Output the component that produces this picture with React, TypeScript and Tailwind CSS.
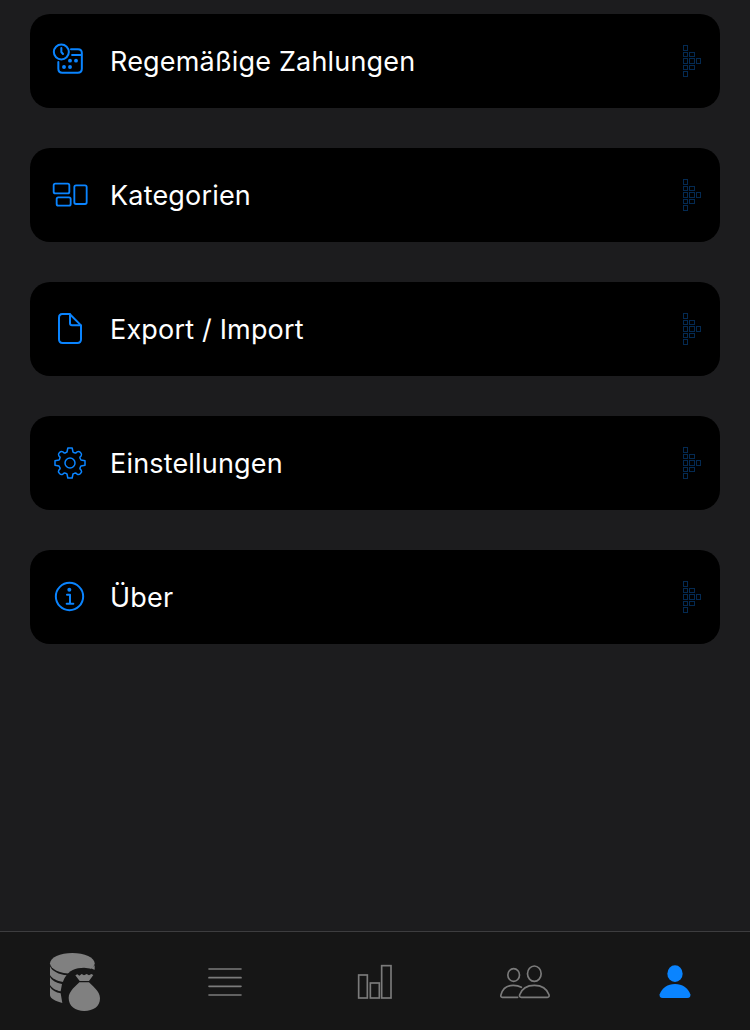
import type { ReactNode } from "react";

const gearPath = (() => {
  const segments: string[] = [];
  for (let i = 0; i < 8; i++) {
    const a = (i * Math.PI) / 4;
    const at = (x: number, y: number) => {
      const px = 90 + x * Math.cos(a) - y * Math.sin(a);
      const py = 75 + x * Math.sin(a) + y * Math.cos(a);
      return `${px.toFixed(1)} ${py.toFixed(1)}`;
    };
    const start = `${i === 0 ? "M" : "L"}${at(-9, -33)}`;
    // Teeth on the diagonals are rounded, the others have flat tips.
    const tip =
      i % 2 === 0
        ? `L${at(-6.5, -45)}L${at(6.5, -45)}`
        : `L${at(-8.5, -39)}Q${at(-7.5, -44.5)} ${at(0, -44.5)}Q${at(7.5, -44.5)} ${at(8.5, -39)}`;
    segments.push(`${start}${tip}L${at(9, -33)}Q${at(11, -31)} ${at(13, -31)}`);
  }
  return `${segments.join("")}Z`;
})();

function RowIcon({ children }: { children: ReactNode }) {
  return (
    <svg
      className="h-[50px] w-[60px] shrink-0"
      viewBox="0 0 180 150"
      fill="none"
      stroke="#0a84ff"
      strokeWidth="6"
      strokeLinecap="round"
      strokeLinejoin="round"
    >
      {children}
    </svg>
  );
}

const rows: { label: string; icon: ReactNode }[] = [
  {
    label: "Regemäßige Zahlungen",
    icon: (
      <>
        <circle cx="64" cy="48" r="22.5" />
        <path d="M64 36V48L69 54" />
        <path d="M93 40H114Q125.500 40 125.500 51V98Q125.500 110 113 110H67Q55 110 55 98V78" />
        <path d="M94 57H125" strokeLinecap="butt" />
        <g fill="#0a84ff" stroke="none">
          <circle cx="90" cy="74" r="5.800" />
          <circle cx="108" cy="74" r="5.800" />
          <circle cx="72" cy="93" r="5.800" />
          <circle cx="90" cy="93" r="5.800" />
        </g>
      </>
    ),
  },
  {
    label: "Kategorien",
    icon: (
      <g strokeWidth="5.500">
        <rect x="41" y="41" width="47" height="29" rx="5" />
        <rect x="50" y="82" width="42" height="25" rx="5" />
        <rect x="103" y="46" width="37" height="56" rx="5" />
      </g>
    ),
  },
  {
    label: "Export / Import",
    icon: (
      <>
        <path d="M67 30H89L123 64V106Q123 117 112 117H68Q57 117 57 106V41Q57 30 67 30Z" />
        <path d="M90 31V58Q90 64 96 64H122" />
      </>
    ),
  },
  {
    label: "Einstellungen",
    icon: (
      <g strokeWidth="4.500">
        <path d={gearPath} />
        <circle cx="90" cy="75" r="15" />
      </g>
    ),
  },
  {
    label: "Über",
    icon: (
      <>
        <circle cx="88.500" cy="73.500" r="41" />
        <circle cx="88" cy="53" r="6" fill="#0a84ff" stroke="none" />
        <path d="M81 68H90V94M80 95H100" />
      </>
    ),
  },
];

const arrowColumns = [
  { x: 40.5, width: 12, rows: [0, 1, 2, 3, 4] },
  { x: 58.5, width: 15, rows: [1, 2, 3] },
  { x: 79.5, width: 12, rows: [2] },
];

const arrowRows = [
  { y: 28.5, height: 15 },
  { y: 49.5, height: 12 },
  { y: 67.5, height: 15 },
  { y: 88.5, height: 12 },
  { y: 106.5, height: 15 },
];

function DottedArrow() {
  return (
    <svg
      className="ml-auto size-[50px] shrink-0"
      viewBox="0 0 150 150"
      fill="none"
      stroke="#042a52"
      strokeWidth="3"
    >
      {arrowColumns.map(({ x, width, rows: cells }) =>
        cells.map((r) => (
          <rect
            key={`${x}-${r}`}
            x={x}
            y={arrowRows[r].y}
            width={width}
            height={arrowRows[r].height}
          />
        )),
      )}
    </svg>
  );
}

function TabIcon({ children }: { children: ReactNode }) {
  return (
    <svg
      className="h-[60px] w-[70px]"
      viewBox="0 0 210 180"
      fill="none"
      stroke="#7b7b7b"
      strokeWidth="5"
      strokeLinecap="round"
      strokeLinejoin="round"
    >
      {children}
    </svg>
  );
}

function SavingsIcon() {
  return (
    <svg className="h-[95px] w-[80px]" viewBox="0 0 240 285" fill="#808080">
      <ellipse cx="97" cy="115" rx="67" ry="31" />
      <path d="M30 124C36 139 56 149 82 151L70 171C50 168 35 160 30 150Z" />
      <path d="M30 156C36 167 49 174 66 177L62 199C47 196 35 189 30 180Z" />
      <path d="M30 186C36 196 47 202 62 205L67 234C48 230 31 221 30 211Z" />
      <path
        d="M76 235C55 188 68 140 114 130Q142 124 165 136V168L135 238Z"
        fill="#161616"
      />
      <path d="M154 130L164 121V134L159 133Z" />
      <path d="M106 151L112 148L118 152L125 147L132 151L140 147L147 151L154 147L160 150L147 168H119Z" />
      <path d="M118 172H147C155 181 180 198 180 220C180 245 160 258 133 258C106 258 86 243 86 219C86 198 110 181 118 172Z" />
    </svg>
  );
}

export default function App() {
  return (
    <div className="flex h-[1030px] w-[750px] flex-col overflow-hidden bg-[#1c1c1e] font-['Inter',sans-serif]">
      <main className="flex flex-1 flex-col gap-10 px-[30px] pt-[14px]">
        {rows.map(({ label, icon }) => (
          <button
            key={label}
            className="flex h-[94px] w-full items-center rounded-[20px] bg-black pl-[10px] text-left"
          >
            <RowIcon>{icon}</RowIcon>
            <span className="ml-[10px] pt-[2px] text-[27px] leading-[34px] tracking-[0.18px] text-white">
              {label}
            </span>
            <DottedArrow />
          </button>
        ))}
      </main>
      <nav className="grid h-[99px] grid-cols-5 justify-items-center border-t border-[#3d3d3f] bg-[#161616]">
        <button className="-mt-[7px] h-[95px] pl-[10px]">
          <SavingsIcon />
        </button>
        <button className="mt-[18px] h-[60px]">
          <TabIcon>
            <path d="M57 57H153M57 83H153M57 109H153M57 135H153" />
          </TabIcon>
        </button>
        <button className="mt-[18px] h-[60px]">
          <TabIcon>
            <g strokeLinejoin="miter">
              <rect x="56" y="75" width="26" height="69" />
              <rect x="91" y="99" width="27" height="45" />
              <rect x="125" y="47" width="28" height="97" />
            </g>
          </TabIcon>
        </button>
        <button className="mt-[18px] h-[60px]">
          <TabIcon>
            <ellipse cx="71" cy="75" rx="17.500" ry="19" />
            <ellipse cx="133" cy="71" rx="20.500" ry="23" />
            <path d="M83 142H37Q31 142 33 134C38 116 51 106 70 106Q84 106 94 112" />
            <path d="M94 142Q87 142 89 134C96 115 113 106 133 106S170 115 177 134Q179 142 172 142Z" />
          </TabIcon>
        </button>
        <button className="mt-[18px] h-[60px]">
          <TabIcon>
            <g fill="#0a84ff" stroke="none">
              <ellipse cx="105" cy="71" rx="23" ry="25" />
              <path d="M68 144Q57 144 59 133C66 113 83 102 105 102S144 113 151 133Q153 144 142 144Z" />
            </g>
          </TabIcon>
        </button>
      </nav>
    </div>
  );
}
